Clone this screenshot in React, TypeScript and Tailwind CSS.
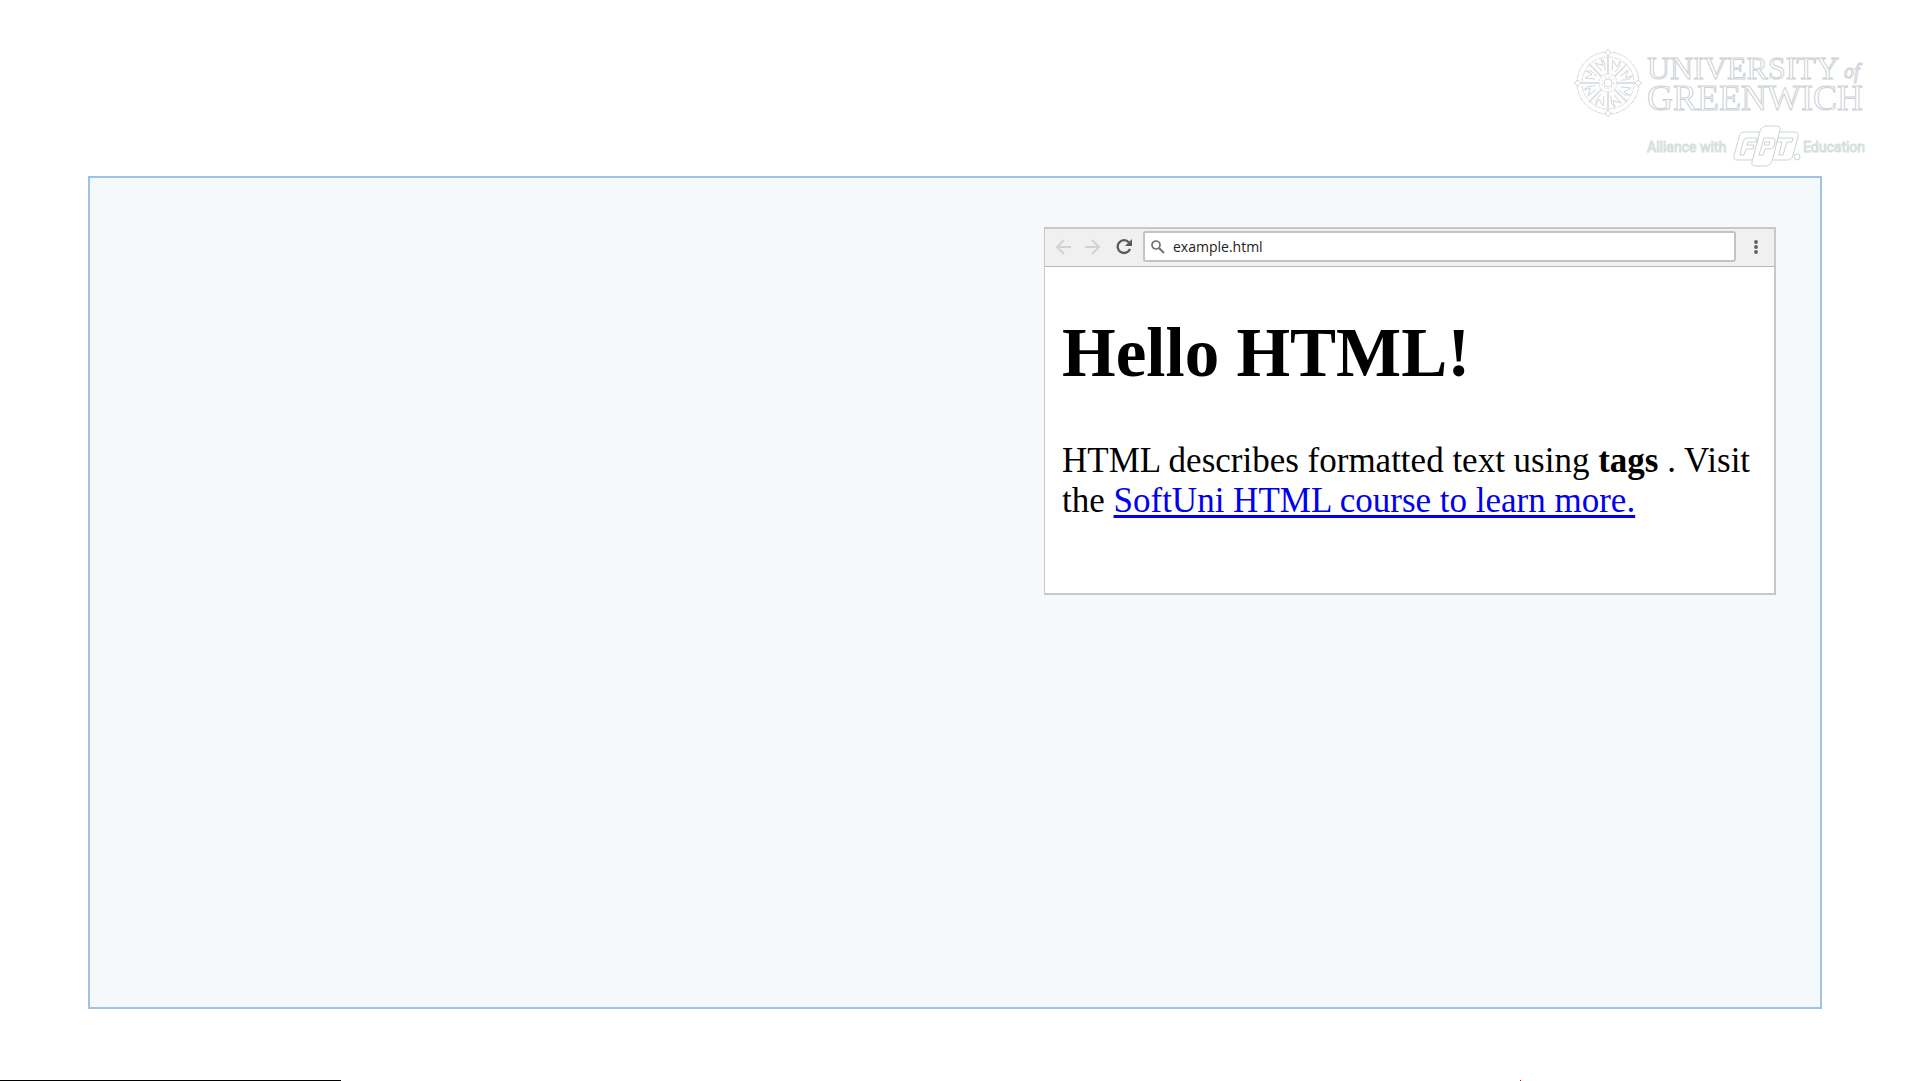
import React from 'react';

const spokes = [0, 45, 90, 135, 180, 225, 270, 315];

function Compass() {
  return (
    <g transform="translate(48 43)" fill="none" stroke="#d3d8dc" strokeWidth="1">
      <circle r="31" strokeDasharray="5 1" />
      <circle r="26" stroke="#d9dde0" strokeDasharray="7 1" />
      {spokes.map(angle => (
        <g key={angle} transform={`rotate(${angle})`}>
          <path d="M0 -9V-27" strokeWidth="2" stroke="#dde1e4" />
          <path d="M4 -13L5 -23L9 -16L12 -22L12 -17L7 -11" />
        </g>
      ))}
      {[0, 90, 180, 270].map(angle => (
        <path key={angle} transform={`rotate(${angle})`} d="M-3 -30L0 -34L3 -30L0 -27Z" fill="#fff" />
      ))}
      <circle r="9" strokeDasharray="2 1" />
      <circle r="6" strokeDasharray="2 2" />
      <circle r="4" fill="#fff" />
    </g>
  );
}

function FptMark() {
  return (
    <g fill="#fff" stroke="#ccd3d3" strokeWidth="1" strokeLinejoin="round">
      <path d="M185 92H200L193 120H177Q173 120 174 116L179 97Q180 92 185 92Z" />
      <path d="M219 92H234Q239 92 238 97L233 115Q232 120 227 120H212Z" />
      <path d="M207 86H216Q221 86 220 90L212 121Q210 126 205 126H196Q191 126 192 122L200 91Q202 86 207 86Z" />
      <path d="M187 98H197L196 102H188L187 105H194L193 109H186L184 115H180L183 102Q184 98 187 98Z" />
      <path d="M204 98H212Q216 98 215 102L214 106Q213 109 209 109H205L203 115H199Z" />
      <path d="M205 102H210L209 105H204Z" />
      <path d="M218 98H233L232 102H227L223 115H219L222 102H217Z" />
      <circle cx="237" cy="117" r="3" />
    </g>
  );
}

function UniversityLogo() {
  return (
    <svg
      width="320"
      height="136"
      viewBox="0 0 320 136"
      role="img"
      aria-label="University of Greenwich, Alliance with FPT Education"
      className="shrink-0"
    >
      <Compass />
      <g fill="#fff" stroke="#ccd1d5" strokeWidth="1" className="font-['Liberation_Serif',serif]">
        <text x="87" y="39" fontSize="32">UNIVERSITY</text>
        <text x="284" y="38" fontSize="20" fontStyle="italic">of</text>
        <text x="87" y="70" fontSize="36">GREENWICH</text>
      </g>
      <g fill="#fff" stroke="#d3e0de" strokeWidth="1" className="font-[Roboto,sans-serif]">
        <text x="87" y="112" fontSize="14">Alliance with</text>
        <text x="243" y="112" fontSize="14">Education</text>
      </g>
      <FptMark />
    </svg>
  );
}

function Toolbar() {
  return (
    <div className="flex h-[38px] items-center border-b border-[#b8b8b8] bg-[#f0f0f0] pb-[2px] pl-[10px] pr-[14px]">
      <button type="button" aria-label="Back" disabled className="mr-[14px]">
        <svg width="16" height="16" viewBox="0 0 16 16" fill="none" stroke="#d2d2d2" strokeWidth="2">
          <path d="M16 8H2M9 1L2 8L9 15" />
        </svg>
      </button>
      <button type="button" aria-label="Forward" disabled className="mr-[15px]">
        <svg width="16" height="16" viewBox="0 0 16 16" fill="none" stroke="#d2d2d2" strokeWidth="2">
          <path d="M0 8H14M7 1L14 8L7 15" />
        </svg>
      </button>
      <button type="button" aria-label="Reload" className="mr-[10px]">
        <svg width="17" height="16" viewBox="0 0 17 16" fill="none">
          <path d="M13 3.5A6.4 6.4 0 1 0 14 10" stroke="#5a5a5a" strokeWidth="2.3" />
          <path d="M16 0V7H9Z" fill="#5a5a5a" />
        </svg>
      </button>
      <label className="flex h-[31px] flex-1 items-center gap-2 rounded-[3px] border-2 border-[#c3c3c3] bg-white pl-[6px]">
        <svg width="14" height="14" viewBox="0 0 14 14" fill="none" stroke="#707070" strokeWidth="1.7">
          <circle cx="5" cy="5" r="4" />
          <path d="M8 8L13 13" strokeWidth="2" />
        </svg>
        <input
          type="text"
          aria-label="Address"
          defaultValue="example.html"
          className="min-w-0 flex-1 bg-transparent font-['Open_Sans',sans-serif] text-sm text-[#222] outline-none"
        />
      </label>
      <button type="button" aria-label="Menu" className="ml-[16px]">
        <svg width="8" height="16" viewBox="0 0 8 16" fill="#5f5f5f">
          <circle cx="4" cy="3" r="1.9" />
          <circle cx="4" cy="8" r="1.9" />
          <circle cx="4" cy="13" r="1.9" />
        </svg>
      </button>
    </div>
  );
}

function BrowserWindow() {
  return (
    <section className="min-h-[368px] w-[732px] max-w-full border-2 border-l border-[#c8c8c8] bg-white">
      <Toolbar />
      <div className="px-[17px] pt-[46px] font-['Liberation_Serif',serif] text-black">
        <h1 className="text-[69px] font-bold leading-[80px]">Hello HTML!</h1>
        <p className="pt-12 text-[35px] leading-10">
          HTML describes formatted text using <b>tags</b> . Visit the{' '}
          <a href="#course" className="text-[#0000ee] underline decoration-[3px] underline-offset-[3px]">
            SoftUni HTML course to learn more.
          </a>
        </p>
      </div>
    </section>
  );
}

export default function App() {
  return (
    <div className="flex min-h-screen flex-col bg-white">
      <header className="flex justify-end pr-[41px] pt-10">
        <UniversityLogo />
      </header>
      <main className="ml-[88px] mr-[99px] flex flex-1 items-start justify-end border-2 border-[#9dc3e6] bg-[#f5f9fc] pr-11 pt-[49px]">
        <BrowserWindow />
      </main>
      <footer className="flex h-[72px] items-end justify-between pr-[400px]">
        <div className="h-px w-[341px] bg-black" />
        <div className="h-px w-px bg-red-600" />
      </footer>
    </div>
  );
}
